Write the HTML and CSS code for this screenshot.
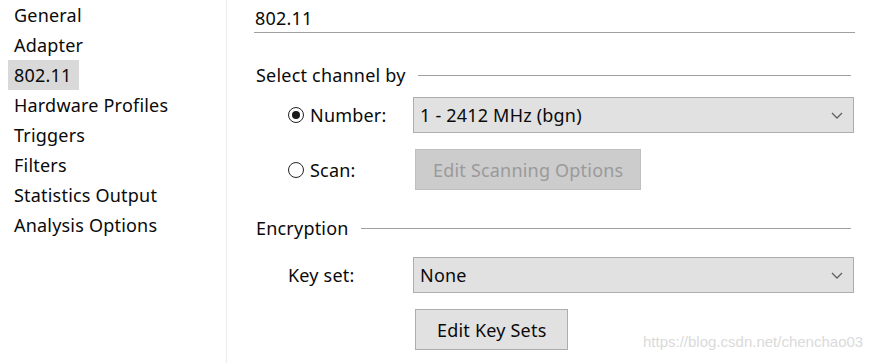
FILE: index.html
```html
<!DOCTYPE html>
<html lang="en">
<head>
    <meta charset="UTF-8">
    <title>802.11</title>
    <link rel="stylesheet" href="styles.css">
</head>
<body>
    <div class="window">
        <!-- 왼쪽 메뉴 -->
        <ul class="nav">
            <li>General</li>
            <li>Adapter</li>
            <li><span class="selected">802.11</span></li>
            <li>Hardware Profiles</li>
            <li>Triggers</li>
            <li>Filters</li>
            <li>Statistics Output</li>
            <li>Analysis Options</li>
        </ul>

        <div class="page">
            <div class="page-title">802.11</div>

            <div class="group-title"><span>Select channel by</span><div class="rule"></div></div>
            <div class="form">
                <label class="radio"><span class="dot checked"></span>Number:</label>
                <div class="combo">
                    <span>1 - 2412 MHz (bgn)</span>
                    <svg class="chevron" width="12" height="7" viewBox="0 0 12 7"><path d="M1 1l5 5 5-5" fill="none" stroke="#606060" stroke-width="1.3"/></svg>
                </div>

                <label class="radio"><span class="dot"></span>Scan:</label>
                <div><button class="button" disabled>Edit Scanning Options</button></div>
            </div>

            <div class="group-title enc"><span>Encryption</span><div class="rule"></div></div>
            <div class="form">
                <label class="field">Key set:</label>
                <div class="combo">
                    <span>None</span>
                    <svg class="chevron" width="12" height="7" viewBox="0 0 12 7"><path d="M1 1l5 5 5-5" fill="none" stroke="#606060" stroke-width="1.3"/></svg>
                </div>

                <div></div>
                <div><button class="button keys">Edit Key Sets</button></div>
            </div>
        </div>
    </div>
    <div class="watermark">https://blog.csdn.net/chenchao03</div>
</body>
</html>
```

FILE: styles.css
```css
body {
    margin: 0;
    font-family: 'Noto Sans', 'Open Sans', sans-serif;
    font-size: 18px;
    letter-spacing: 0.2px;
    color: #0a0a0a;
    background: white;
}
.window {
    display: flex;
    height: 363px;
}
.nav {
    list-style: none;
    margin: 0;
    padding: 0;
    width: 226px;
    border-right: 1px solid #ececec;
}
.nav li {
    height: 30px;
    line-height: 30px;
    padding-left: 14px;
    white-space: nowrap;
}
.selected {
    display: inline-block;
    background-color: #d9d9d9;
    padding: 0 7px 0 6px;
    margin-left: -6px;
}
.page {
    flex: 1;
    padding: 0 30px 0 27px;
}
.page-title {
    height: 32px;
    line-height: 36px;
    border-bottom: 1px solid #a0a0a0;
    padding-left: 1px;
}
.group-title {
    display: flex;
    align-items: center;
    gap: 12px;
    margin-top: 32px;
    height: 20px;
    padding-left: 2px;
    margin-right: 4px;
}
.group-title.enc {
    margin-top: 28px;
}
.rule {
    flex: 1;
    border-top: 1px solid #a0a0a0;
}
.form {
    display: grid;
    grid-template-columns: 125px 1fr;
    row-gap: 16px;
    margin-top: 12px;
    padding-left: 34px;
    margin-right: 1px;
}
.enc + .form {
    margin-top: 19px;
}
.radio, .field {
    display: flex;
    align-items: center;
}
.dot {
    flex: none;
    width: 16px;
    height: 16px;
    box-sizing: border-box;
    border: 1.5px solid #222;
    border-radius: 50%;
    margin-right: 6px;
    position: relative;
}
.dot.checked::after {
    content: "";
    position: absolute;
    left: 2.5px;
    top: 2.5px;
    width: 8px;
    height: 8px;
    border-radius: 50%;
    background: #1a1a1a;
}
.combo {
    height: 36px;
    box-sizing: border-box;
    background-color: #e1e1e1;
    border: 1px solid #adadad;
    display: flex;
    align-items: center;
    justify-content: space-between;
    padding: 0 10px 0 6px;
}
.button {
    font-family: inherit;
    font-size: 18px;
    letter-spacing: 0.2px;
    height: 41px;
    padding: 0 17px;
    margin-left: 2px;
    background-color: #e1e1e1;
    border: 1px solid #adadad;
    color: #0a0a0a;
}
.button:disabled {
    background-color: #cccccc;
    border-color: #bfbfbf;
    color: #9a9a9a;
}
.button.keys {
    padding: 0 21px;
}
.watermark {
    position: absolute;
    left: 643px;
    top: 333px;
    font-family: 'Liberation Sans', Arial, sans-serif;
    font-size: 15px;
    letter-spacing: 0;
    color: #dadada;
}
```
